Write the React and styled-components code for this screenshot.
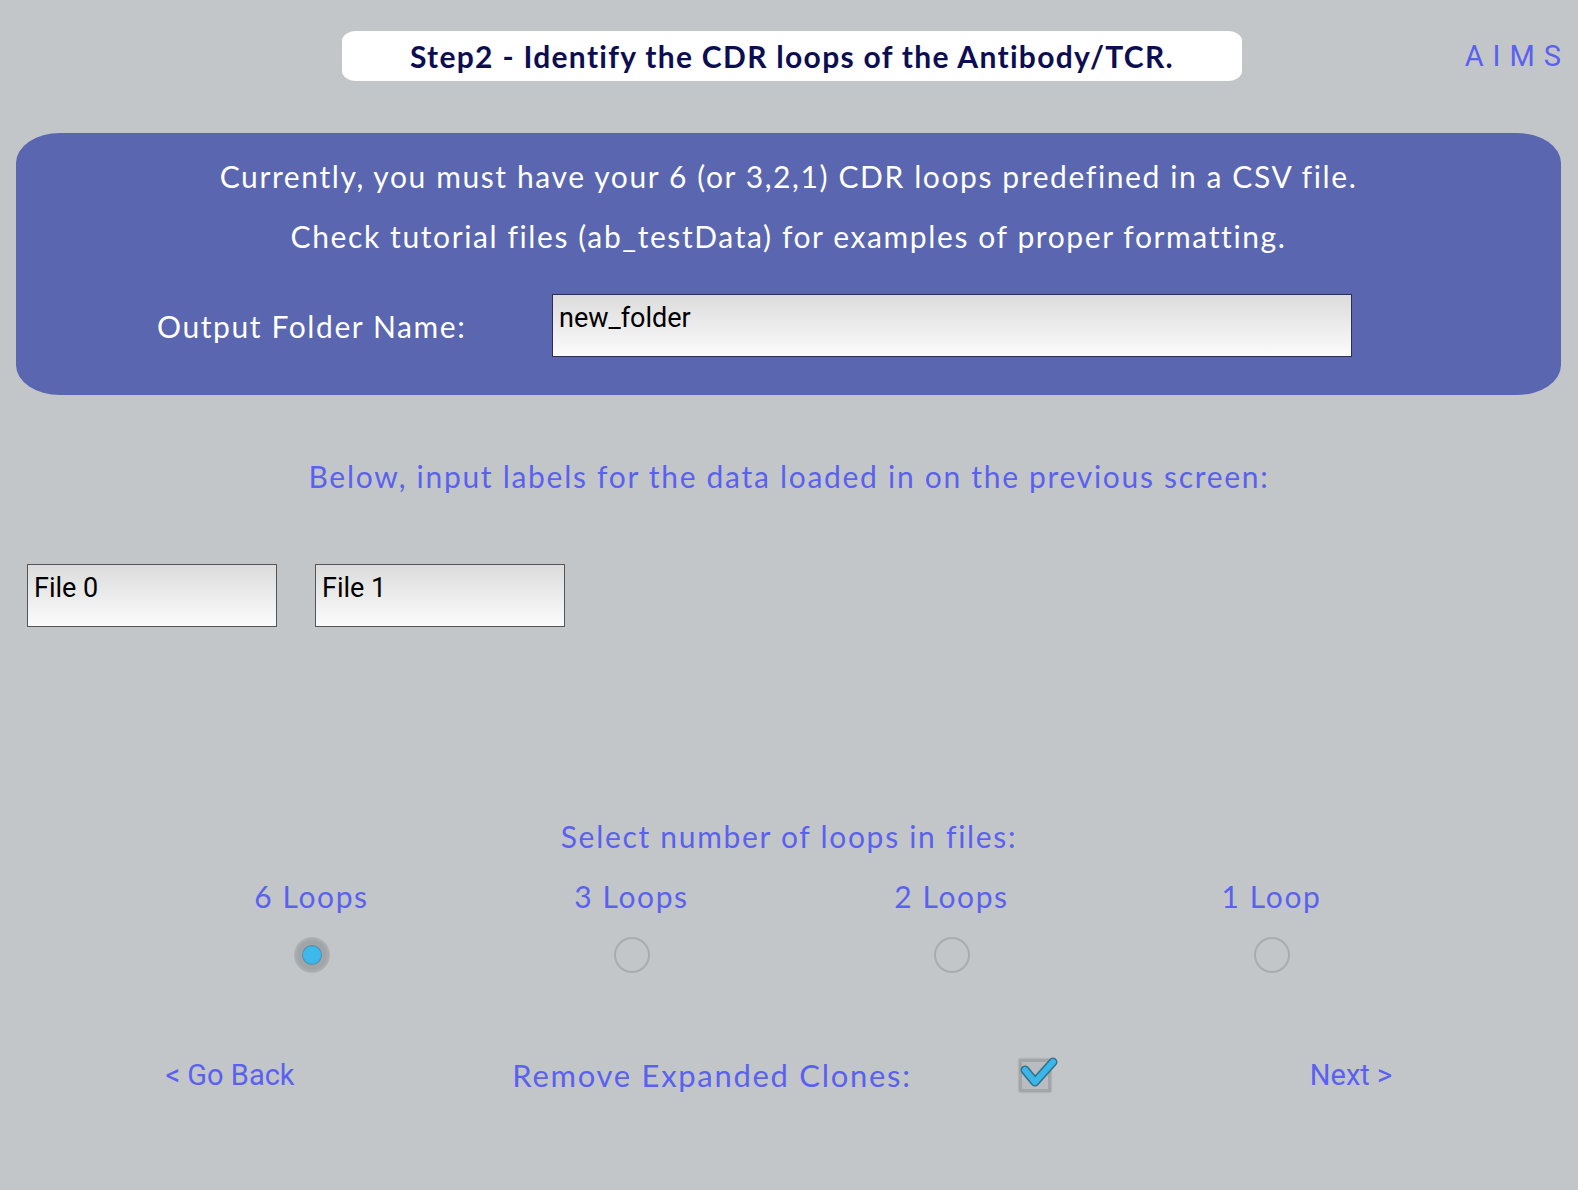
import React from "react";
import styled, { createGlobalStyle } from "styled-components";

const GlobalStyle = createGlobalStyle`
  html, body {
    margin: 0;
    padding: 0;
    background: #c3c6c9;
  }
  body {
    font-family: "Lato", "Noto Sans", sans-serif;
  }
`;

const BLUE = "#5a61f0";
const SANS = `"Lato", "Noto Sans", sans-serif`;
const KIVY = `Roboto, "Liberation Sans", sans-serif`;

// whole screen
const Screen = styled.div`
  width: 1578px;
  height: 1190px;
  overflow: hidden;
  display: flex;
  flex-direction: column;
`;

// top bar with the step title and the app name
const TopBar = styled.div`
  display: grid;
  grid-template-columns: 342px 900px 1fr;
  align-items: center;
  padding-top: 31px;
`;

const StepPill = styled.div`
  grid-column: 2;
  height: 50px;
  background: #fff;
  border-radius: 14px / 10px;
  display: flex;
  align-items: center;
  justify-content: center;
  font-family: ${SANS};
  font-weight: 700;
  font-size: 30px;
  letter-spacing: 1.3px;
  color: #0d0d52;
`;

const AppName = styled.div`
  justify-self: end;
  padding-right: 8px;
  font-family: ${KIVY};
  font-size: 29px;
  letter-spacing: 9px;
  color: ${BLUE};
`;

// purple info panel
const InfoPanel = styled.div`
  margin: 52px 17px 0 16px;
  padding: 23px 0 38px;
  background: #5a66b0;
  border-radius: 44px / 30px;
  display: flex;
  flex-direction: column;
  color: #fff;
`;

const InfoLine = styled.div`
  height: 40px;
  line-height: 40px;
  text-align: center;
  font-family: ${SANS};
  font-size: 30px;
  letter-spacing: 1.6px;
  & + & {
    margin-top: 20px;
  }
`;

const FolderRow = styled.div`
  display: grid;
  grid-template-columns: 395px 800px;
  align-items: center;
  margin-top: 38px;
  padding-left: 141px;
`;

const FolderLabel = styled.div`
  font-family: ${SANS};
  font-size: 30px;
  letter-spacing: 1.6px;
  color: #fff;
`;

const TextField = styled.input`
  box-sizing: border-box;
  width: ${(p) => p.$width}px;
  height: 63px;
  margin: 0;
  padding: 0 6px 15px;
  border: 1px solid ${(p) => p.$border || "#555"};
  border-radius: 0;
  outline: none;
  background: linear-gradient(#dcdcdc, #fbfbfb);
  font-family: ${KIVY};
  font-size: 27px;
  color: #000;
`;

// blue headings on the gray page
const Heading = styled.div`
  height: 40px;
  line-height: 40px;
  text-align: center;
  margin-top: ${(p) => p.$top}px;
  font-family: ${SANS};
  font-size: 30px;
  letter-spacing: 1.7px;
  color: ${BLUE};
`;

const FileRow = styled.div`
  display: flex;
  gap: 38px;
  margin-top: 68px;
  padding-left: 27px;
`;

const LoopGrid = styled.div`
  display: grid;
  grid-template-columns: repeat(4, 320px);
  justify-content: center;
  justify-items: center;
  row-gap: 21px;
  margin-top: 20px;
  padding-left: 5px;
`;

const LoopLabel = styled.div`
  height: 40px;
  line-height: 40px;
  font-family: ${SANS};
  font-size: 30px;
  letter-spacing: 1.6px;
  color: ${BLUE};
`;

const Radio = styled.div`
  box-sizing: border-box;
  width: 36px;
  height: 36px;
  border-radius: 50%;
  display: flex;
  align-items: center;
  justify-content: center;
  border: ${(p) => (p.$on ? "none" : "2px solid #a9acaf")};
  background: ${(p) =>
    p.$on ? "radial-gradient(circle, #a2a5a8 55%, #b4b7ba 75%, #c3c6c9 100%)" : "transparent"};
`;

const RadioDot = styled.div`
  width: 18px;
  height: 18px;
  border-radius: 50%;
  background: #3cb8ea;
  box-shadow: 0 0 0 1px #4d8fae;
`;

// footer row with navigation and the clone toggle
const FooterRow = styled.div`
  display: grid;
  grid-template-columns: 460px 504px 142px 1fr;
  align-items: center;
  justify-items: center;
  height: 50px;
  margin-top: 77px;
`;

const NavLink = styled.div`
  font-family: ${KIVY};
  font-size: 29px;
  color: ${BLUE};
  padding-left: ${(p) => p.$shift || 0}px;
`;

const ToggleLabel = styled.div`
  font-family: ${SANS};
  font-size: 31px;
  letter-spacing: 1.7px;
  color: ${BLUE};
`;

const CheckWrap = styled.div`
  position: relative;
  width: 32px;
  height: 33px;
`;

const CheckBox = styled.div`
  box-sizing: border-box;
  width: 32px;
  height: 33px;
  border: 3px solid #a3a6a9;
  background: #b9bcbf;
  box-shadow: 0 0 2px rgba(0, 0, 0, 0.25);
`;

const CheckMark = styled.svg`
  position: absolute;
  left: 0;
  top: 0;
  overflow: visible;
`;

const loops = ["6 Loops", "3 Loops", "2 Loops", "1 Loop"];

export default function App() {
  return (
    <Screen>
      <GlobalStyle />
      <TopBar>
        <StepPill>Step2 - Identify the CDR loops of the Antibody/TCR.</StepPill>
        <AppName>AIMS</AppName>
      </TopBar>

      <InfoPanel>
        <InfoLine>
          Currently, you must have your 6 (or 3,2,1) CDR loops predefined in a CSV file.
        </InfoLine>
        <InfoLine>
          Check tutorial files (ab_testData) for examples of proper formatting.
        </InfoLine>
        <FolderRow>
          <FolderLabel>Output Folder Name:</FolderLabel>
          <TextField $width={800} $border="#2c2f50" defaultValue="new_folder" />
        </FolderRow>
      </InfoPanel>

      <Heading $top={61}>Below, input labels for the data loaded in on the previous screen:</Heading>

      <FileRow>
        <TextField $width={250} defaultValue="File 0" />
        <TextField $width={250} defaultValue="File 1" />
      </FileRow>

      <Heading $top={189}>Select number of loops in files:</Heading>

      <LoopGrid>
        {loops.map((l) => (
          <LoopLabel key={l}>{l}</LoopLabel>
        ))}
        {loops.map((l, i) => (
          <Radio key={l + "r"} $on={i === 0}>
            {i === 0 && <RadioDot />}
          </Radio>
        ))}
      </LoopGrid>

      <FooterRow>
        <NavLink>&lt; Go Back</NavLink>
        <ToggleLabel>Remove Expanded Clones:</ToggleLabel>
        <CheckWrap>
          <CheckBox />
          <CheckMark width="32" height="33" viewBox="0 0 32 33">
            <polyline
              points="6,11 16,23 34,3"
              fill="none"
              stroke="#2f6f8d"
              strokeWidth="9"
              strokeLinecap="round"
              strokeLinejoin="round"
            />
            <polyline
              points="6,11 16,23 34,3"
              fill="none"
              stroke="#3bb6e6"
              strokeWidth="6"
              strokeLinecap="round"
              strokeLinejoin="round"
            />
          </CheckMark>
        </CheckWrap>
        <NavLink $shift={18}>Next &gt;</NavLink>
      </FooterRow>
    </Screen>
  );
}
